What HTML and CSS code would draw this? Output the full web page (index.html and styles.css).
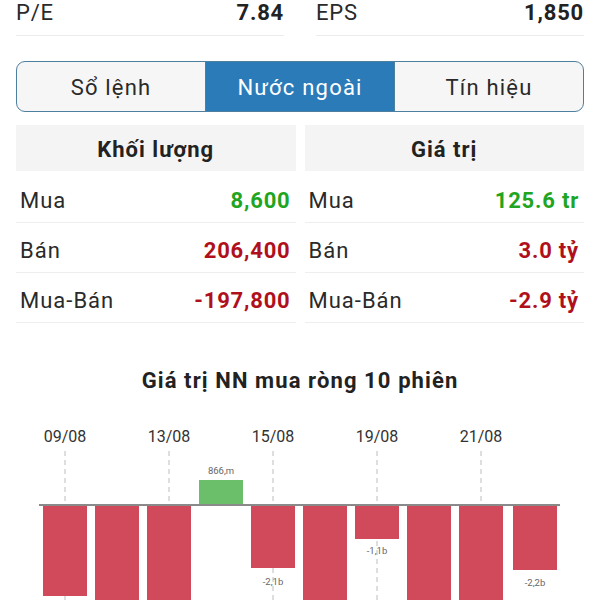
FILE: index.html
```html
<!DOCTYPE html>
<html lang="vi">
<head>
<meta charset="utf-8">
<link rel="stylesheet" href="styles.css">
</head>
<body>
<div class="page">
  <div class="stats">
    <div class="stat"><span class="stat-label">P/E</span><span class="stat-value">7.84</span></div>
    <div class="stat"><span class="stat-label">EPS</span><span class="stat-value">1,850</span></div>
  </div>

  <div class="tabs">
    <div class="tab">Sổ lệnh</div>
    <div class="tab active">Nước ngoài</div>
    <div class="tab">Tín hiệu</div>
  </div>

  <div class="tables">
    <div class="table">
      <div class="thead">Khối lượng</div>
      <div class="row"><span class="lbl">Mua</span><span class="val up">8,600</span></div>
      <div class="row"><span class="lbl">Bán</span><span class="val down">206,400</span></div>
      <div class="row"><span class="lbl">Mua-Bán</span><span class="val down">-197,800</span></div>
    </div>
    <div class="table">
      <div class="thead">Giá trị</div>
      <div class="row"><span class="lbl">Mua</span><span class="val up">125.6 tr</span></div>
      <div class="row"><span class="lbl">Bán</span><span class="val down">3.0 tỷ</span></div>
      <div class="row"><span class="lbl">Mua-Bán</span><span class="val down">-2.9 tỷ</span></div>
    </div>
  </div>

  <h2 class="chart-title">Giá trị NN mua ròng 10 phiên</h2>

  <svg class="chart" width="600" height="210" viewBox="0 0 600 210">
    <g class="dates">
      <text x="65" y="49">09/08</text>
      <text x="169" y="49">13/08</text>
      <text x="273" y="49">15/08</text>
      <text x="377" y="49">19/08</text>
      <text x="481" y="49">21/08</text>
    </g>
    <g class="grid">
      <line x1="65" y1="58" x2="65" y2="210"/>
      <line x1="169" y1="58" x2="169" y2="210"/>
      <line x1="273" y1="58" x2="273" y2="210"/>
      <line x1="377" y1="58" x2="377" y2="210"/>
      <line x1="481" y1="58" x2="481" y2="210"/>
    </g>
    <g class="bars-neg">
      <rect x="43" y="112" width="44" height="91"/>
      <rect x="95" y="112" width="44" height="110"/>
      <rect x="147" y="112" width="44" height="110"/>
      <rect x="251" y="112" width="44" height="63"/>
      <rect x="303" y="112" width="44" height="110"/>
      <rect x="355" y="112" width="44" height="34"/>
      <rect x="407" y="112" width="44" height="110"/>
      <rect x="459" y="112" width="44" height="110"/>
      <rect x="513" y="112" width="44" height="65"/>
    </g>
    <rect class="bar-pos" x="199" y="87" width="44" height="25"/>
    <line class="axis" x1="39" y1="112" x2="560" y2="112"/>
    <g class="vals">
      <text x="221" y="81">866,m</text>
      <text x="273" y="192">-2,1b</text>
      <text x="377" y="161">-1,1b</text>
      <text x="535" y="193">-2,2b</text>
    </g>
  </svg>
</div>
</body>
</html>
```

FILE: styles.css
```css
* { box-sizing: border-box; }
html, body { margin: 0; padding: 0; background: #fff; }
body {
  font-family: Roboto, "Noto Sans", "Liberation Sans", sans-serif;
  color: #222;
  overflow: hidden;
}
.page { width: 600px; }

.stats {
  display: flex;
  gap: 32px;
  padding: 0 16px;
}
.stat {
  flex: 1;
  display: flex;
  justify-content: space-between;
  height: 36px;
  line-height: 26px;
  font-size: 22px;
  letter-spacing: 0.8px;
  border-bottom: 1px solid #ececec;
}
.stat-label { color: #2a2a2a; }
.stat-value { font-weight: 700; color: #222; }

.tabs {
  display: flex;
  margin: 25px 16px 0;
  height: 51px;
  border: 1.5px solid #4f7f9e;
  border-radius: 9px;
  overflow: hidden;
  background: #f6f6f6;
}
.tab {
  flex: 1;
  display: flex;
  align-items: center;
  justify-content: center;
  padding-top: 2px;
  font-size: 22px;
  letter-spacing: 1.2px;
  color: #2a2a2a;
}
.tab + .tab { border-left: 1.5px solid #4f7f9e; }
.tab.active { background: #2b7bb9; color: #fff; }

.tables {
  display: flex;
  gap: 9px;
  margin: 13px 16px 0;
}
.table { flex: 1; }
.thead {
  height: 46px;
  margin-bottom: 2px;
  padding-top: 3px;
  background: #f4f4f4;
  display: flex;
  align-items: center;
  justify-content: center;
  font-weight: 700;
  font-size: 22px;
  letter-spacing: 1px;
  color: #222;
}
.row {
  height: 50px;
  display: flex;
  align-items: center;
  justify-content: space-between;
  padding: 6px 5px 0 4px;
  border-bottom: 1px solid #eeeeee;
  font-size: 22px;
}
.lbl { color: #2a2a2a; letter-spacing: 1px; }
.val { font-weight: 700; letter-spacing: 0.8px; }
.up { color: #1fa51f; }
.down { color: #b0101c; }

.chart-title {
  margin: 46px 0 0;
  text-align: center;
  font-size: 22px;
  line-height: 24px;
  letter-spacing: 1.1px;
  font-weight: 700;
  color: #222;
}

.chart { display: block; }
.dates text {
  font-family: Roboto, "Noto Sans", sans-serif;
  font-size: 16px;
  fill: #333;
  text-anchor: middle;
}
.grid line {
  stroke: #bdbdbd;
  stroke-width: 1;
  stroke-dasharray: 5 4;
}
.bars-neg rect { fill: #d04a5c; }
.bar-pos { fill: #6cbf6a; }
.axis { stroke: #8a8a8a; stroke-width: 2; }
.vals text {
  font-family: Roboto, "Noto Sans", sans-serif;
  font-size: 9.5px;
  fill: #666;
  text-anchor: middle;
}
```
